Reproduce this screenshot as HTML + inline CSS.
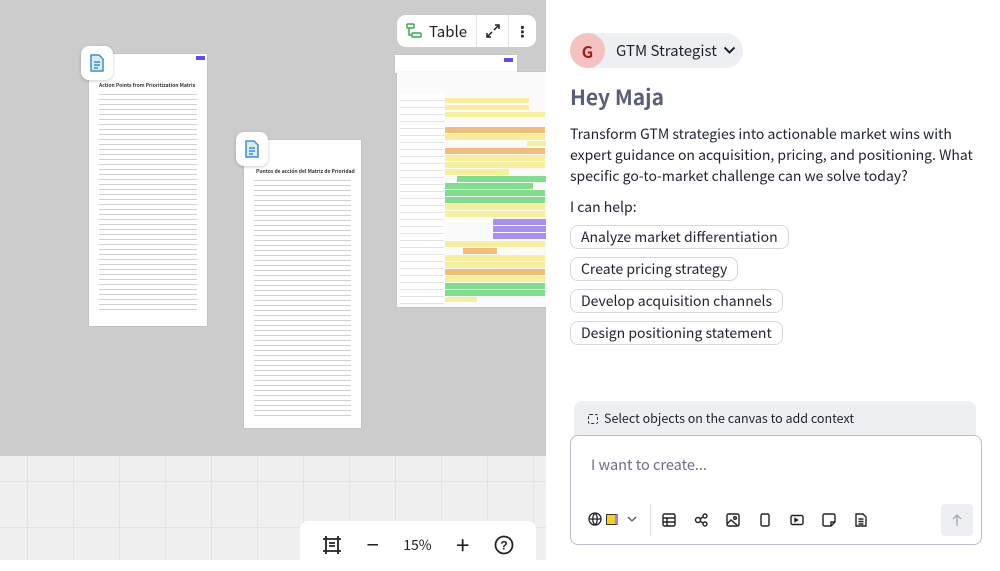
<!DOCTYPE html>
<html><head><meta charset="utf-8"><style>
*{box-sizing:border-box;margin:0;padding:0}
body{width:1000px;height:560px;overflow:hidden;font-family:"Noto Sans CJK JP","Liberation Sans","DejaVu Sans",sans-serif;position:relative;background:#fff}
.canvas{position:absolute;left:0;top:0;width:546px;height:560px;background-color:#f0f0f0;background-image:linear-gradient(90deg,#e4e4e4 1px,transparent 1px),linear-gradient(#e4e4e4 1px,transparent 1px);background-size:46px 46px;background-position:27px 21px}
.shade{position:absolute;left:0;top:0;width:546px;height:456px;background:#cccccc}
.doc{position:absolute;background:#fff;box-shadow:0 0 1px rgba(0,0,0,.2)}
.lines{position:absolute;left:10px;right:10px;background:repeating-linear-gradient(#fff 0 2px,#d0d0d0 2px 3px,#fff 3px 5px)}
.ico{position:absolute;width:32px;height:34px;background:#fff;border-radius:8px;box-shadow:0 1px 3px rgba(0,0,0,.2);display:flex;align-items:center;justify-content:center}
.tb{position:absolute;left:397px;top:15px;width:139px;height:32px;background:#fff;border-radius:9px;display:flex;align-items:center;font-size:15px;color:#222}
.zb{position:absolute;left:300px;top:521px;width:236px;height:50px;background:#fff;border-radius:8px;display:flex;align-items:center;justify-content:space-around;padding:0 10px;font-size:14px;color:#222}
.panel{position:absolute;left:546px;top:0;width:454px;height:560px;background:#fff}
.chip{position:absolute;left:24px;border:1px solid #d5d7de;border-radius:8px;padding:0 10px;font-size:14px;line-height:22px;color:#1f2330;white-space:nowrap}
.t{font-size:14px;color:#1f2330;line-height:21px}
</style></head><body>
<div class="canvas"></div>
<div class="shade"></div>

<div class="doc" style="left:89px;top:54px;width:118px;height:272px">
<div style="position:absolute;right:2px;top:2px;width:9px;height:4px;background:#5b4cf5"></div>
<div style="position:absolute;left:10px;top:28px;font-size:5px;font-weight:bold;color:#333">Action Points from Prioritization Matrix</div>
<div class="lines" style="top:38px;height:222px"></div></div>
<div class="ico" style="left:81px;top:46px"><svg width="16" height="18" viewBox="0 0 16 18"><path d="M2 1h8l4 4v12H2z" fill="#d8ecfa" stroke="#3d8fd0" stroke-width="1.5"/><path d="M5 8h6M5 11h6M5 14h4" stroke="#3d8fd0" stroke-width="1.5"/></svg></div>

<div class="doc" style="left:244px;top:140px;width:117px;height:288px">
<div style="position:absolute;left:12px;top:28px;font-size:5px;font-weight:bold;color:#333">Puntos de acción del Matriz de Prioridad</div>
<div class="lines" style="top:38px;height:240px"></div></div>
<div class="ico" style="left:236px;top:132px"><svg width="16" height="18" viewBox="0 0 16 18"><path d="M2 1h8l4 4v12H2z" fill="#d8ecfa" stroke="#3d8fd0" stroke-width="1.5"/><path d="M5 8h6M5 11h6M5 14h4" stroke="#3d8fd0" stroke-width="1.5"/></svg></div>

<div class="doc" style="left:395px;top:55px;width:122px;height:18px"><div style="position:absolute;right:4px;top:3px;width:9px;height:4px;background:#5b4cf5"></div></div>
<div class="doc" style="left:397px;top:72px;width:149px;height:235px;background:#fbfbfc">
<div style="position:absolute;left:3px;top:22px;width:44px;height:210px;background:repeating-linear-gradient(#fff 0 6px,#e2e2e2 6px 7px)"></div>
<div style="position:absolute;left:48px;top:22px;right:0;height:210px">
<div style="position:absolute;left:0;top:4px;width:84px;height:5px;background:#f8ef9e"></div>
<div style="position:absolute;left:0;top:11px;width:84px;height:5px;background:#f8ef9e"></div>
<div style="position:absolute;left:0;top:18px;width:100px;height:5px;background:#f8ef9e"></div>
<div style="position:absolute;left:0;top:33px;width:100px;height:6px;background:#f2bd78"></div>
<div style="position:absolute;left:0;top:40px;width:100px;height:6px;background:#f8ef9e"></div>
<div style="position:absolute;left:82px;top:47px;width:20px;height:5px;background:#f8ef9e"></div>
<div style="position:absolute;left:0;top:54px;width:100px;height:6px;background:#f2bd78"></div>
<div style="position:absolute;left:0;top:61px;width:100px;height:6px;background:#f8ef9e"></div>
<div style="position:absolute;left:0;top:68px;width:100px;height:6px;background:#f8ef9e"></div>
<div style="position:absolute;left:0;top:75px;width:64px;height:6px;background:#f8ef9e"></div>
<div style="position:absolute;left:12px;top:82px;width:90px;height:6px;background:#80df8c"></div>
<div style="position:absolute;left:0;top:89px;width:88px;height:6px;background:#80df8c"></div>
<div style="position:absolute;left:0;top:96px;width:100px;height:6px;background:#80df8c"></div>
<div style="position:absolute;left:0;top:103px;width:100px;height:6px;background:#80df8c"></div>
<div style="position:absolute;left:0;top:110px;width:100px;height:6px;background:#f8ef9e"></div>
<div style="position:absolute;left:0;top:117px;width:100px;height:6px;background:#f8ef9e"></div>
<div style="position:absolute;left:48px;top:125px;width:54px;height:6px;background:#a88ff0"></div>
<div style="position:absolute;left:48px;top:132px;width:54px;height:6px;background:#a88ff0"></div>
<div style="position:absolute;left:48px;top:139px;width:54px;height:6px;background:#a88ff0"></div>
<div style="position:absolute;left:0;top:147px;width:100px;height:6px;background:#f8ef9e"></div>
<div style="position:absolute;left:18px;top:154px;width:34px;height:6px;background:#f2bd78"></div>
<div style="position:absolute;left:0;top:161px;width:100px;height:6px;background:#f8ef9e"></div>
<div style="position:absolute;left:0;top:168px;width:100px;height:6px;background:#f8ef9e"></div>
<div style="position:absolute;left:0;top:175px;width:100px;height:6px;background:#f2bd78"></div>
<div style="position:absolute;left:0;top:182px;width:100px;height:6px;background:#f8ef9e"></div>
<div style="position:absolute;left:0;top:189px;width:100px;height:6px;background:#80df8c"></div>
<div style="position:absolute;left:0;top:196px;width:100px;height:6px;background:#80df8c"></div>
<div style="position:absolute;left:0;top:203px;width:32px;height:5px;background:#f8ef9e"></div>
</div></div>

<div class="tb"><span style="display:flex;align-items:center;padding:0 9px"><svg width="16" height="16" viewBox="0 0 16 16"><rect x="1" y="1" width="7" height="4" rx="1" fill="none" stroke="#2fae4e" stroke-width="1.5"/><rect x="6" y="10" width="9" height="4" rx="1" fill="none" stroke="#2fae4e" stroke-width="1.5"/><path d="M3 5v7h3" fill="none" stroke="#2fae4e" stroke-width="1.5"/></svg><span style="margin-left:7px">Table</span></span><span style="border-left:1px solid #e3e3e3;height:32px;width:32px;display:flex;align-items:center;justify-content:center"><svg width="14" height="14" viewBox="0 0 14 14" stroke="#222" stroke-width="1.5" fill="none"><path d="M8 6l5-5M9 1h4v4M6 8l-5 5M1 9v4h4"/></svg></span><span style="border-left:1px solid #e3e3e3;height:32px;flex:1;display:flex;align-items:center;justify-content:center;font-weight:bold">⋮</span></div>

<div class="zb" style="align-items:flex-start;padding-top:14px"><svg width="20" height="20" viewBox="0 0 20 20" stroke="#222" stroke-width="1.8" fill="none"><path d="M4 1v18M16 1v18M1 4h18M1 16h18M7 8h6M7 11h6"/></svg><span style="font-size:22px;line-height:18px">−</span><span>15%</span><span style="font-size:24px;line-height:18px">+</span><svg width="20" height="20" viewBox="0 0 20 20"><circle cx="10" cy="10" r="8.5" fill="none" stroke="#222" stroke-width="1.8"/><text x="10" y="14.5" font-size="12" text-anchor="middle" font-weight="bold" fill="#222" font-family="Liberation Sans">?</text></svg></div>

<div class="panel">
<div style="position:absolute;left:24px;top:33px;height:35px;width:173px;background:#eeeff3;border-radius:18px;display:flex;align-items:center">
<div style="width:35px;height:35px;border-radius:50%;background:#f6c1c1;color:#a11d1d;font-size:16px;font-weight:bold;display:flex;align-items:center;justify-content:center">G</div>
<span style="margin-left:11px;font-size:15px;color:#1f2330">GTM Strategist</span>
<svg style="margin-left:6px" width="13" height="9" viewBox="0 0 13 9"><path d="M1.5 1.5l5 5 5-5" fill="none" stroke="#1f2330" stroke-width="2"/></svg></div>
<div style="position:absolute;left:24px;top:82px;font-size:21px;font-weight:bold;color:#5b5e78">Hey Maja</div>
<div class="t" style="position:absolute;left:24px;top:124px;width:415px">Transform GTM strategies into actionable market wins with expert guidance on acquisition, pricing, and positioning. What specific go-to-market challenge can we solve today?</div>
<div class="t" style="position:absolute;left:24px;top:197px">I can help:</div>
<div class="chip" style="top:225px">Analyze market differentiation</div>
<div class="chip" style="top:257px">Create pricing strategy</div>
<div class="chip" style="top:289px">Develop acquisition channels</div>
<div class="chip" style="top:321px">Design positioning statement</div>
<div style="position:absolute;left:28px;top:401px;width:402px;height:40px;background:#eeeff3;border-radius:8px;font-size:12.5px;color:#1f2330;padding:7px 0 0 14px"><span style="display:inline-block;width:10px;height:10px;border:1.5px dashed #333;border-radius:2px;margin-right:6px;vertical-align:-1px"></span>Select objects on the canvas to add context</div>
<div style="position:absolute;left:24px;top:435px;width:412px;height:110px;background:#fff;border:1px solid #b9bccb;border-radius:8px">
<div style="position:absolute;left:20px;top:18px;font-size:14.5px;color:#6b6e84">I want to create...</div>
<div style="position:absolute;left:17px;top:76px;display:flex;align-items:center;gap:4px;font-size:14px">
<svg width="14" height="14" viewBox="0 0 14 14" fill="none" stroke="#222" stroke-width="1.3"><circle cx="7" cy="7" r="6"/><path d="M1 7h12M7 1c-3 3-3 9 0 12M7 1c3 3 3 9 0 12"/></svg>
<span style="display:inline-block;width:12px;height:11px;background:#f2d21a;border:1px solid #333;border-right:3px solid #a77bf0"></span>
<svg width="12" height="8" viewBox="0 0 12 8" style="margin-left:4px"><path d="M2 2l4 4 4-4" fill="none" stroke="#555" stroke-width="1.3"/></svg></div>
<div style="position:absolute;left:79px;top:68px;width:1px;height:32px;background:#ddd"></div>
<div style="position:absolute;left:91px;top:77px;display:flex;gap:18px">
<svg width="14" height="14" viewBox="0 0 14 14" fill="none" stroke="#222" stroke-width="1.4"><rect x="1" y="1" width="12" height="12" rx="1.5"/><path d="M1 5h12M1 9h12M5 5v8"/></svg>
<svg width="14" height="14" viewBox="0 0 14 14" fill="none" stroke="#222" stroke-width="1.4"><circle cx="4" cy="7" r="2.5"/><circle cx="11" cy="3" r="2"/><circle cx="11" cy="11" r="2"/><path d="M6 6l3-2M6 8l3 2"/></svg>
<svg width="14" height="14" viewBox="0 0 14 14" fill="none" stroke="#222" stroke-width="1.4"><rect x="1" y="1" width="12" height="12" rx="1.5"/><path d="M1 11l4-4 7 6"/><circle cx="9" cy="5" r="1.3"/></svg>
<svg width="14" height="14" viewBox="0 0 14 14" fill="none" stroke="#222" stroke-width="1.4"><rect x="3" y="1" width="8" height="12" rx="1.5"/></svg>
<svg width="14" height="14" viewBox="0 0 14 14" fill="none" stroke="#222" stroke-width="1.4"><rect x="1" y="2.5" width="12" height="9" rx="1.5"/><path d="M5 5.5v3l2.5-1.5z" fill="#222"/></svg>
<svg width="14" height="14" viewBox="0 0 14 14" fill="none" stroke="#222" stroke-width="1.4"><path d="M1 2.5a1.5 1.5 0 011.5-1.5h9A1.5 1.5 0 0113 2.5V9l-4 4H2.5A1.5 1.5 0 011 11.5zM13 9H9v4"/></svg>
<svg width="14" height="14" viewBox="0 0 14 14" fill="none" stroke="#222" stroke-width="1.4"><path d="M2 1h7l3 3v9H2z"/><path d="M4.5 6h5M4.5 8.5h5M4.5 11h5"/></svg></div>
<div style="position:absolute;right:8px;top:68px;width:32px;height:32px;background:#eeeff3;border-radius:4px;display:flex;align-items:center;justify-content:center"><svg width="12" height="14" viewBox="0 0 12 14"><path d="M6 13V2M2 6l4-4 4 4" fill="none" stroke="#a9abb8" stroke-width="1.4"/></svg></div>
</div></div>
</body></html>
